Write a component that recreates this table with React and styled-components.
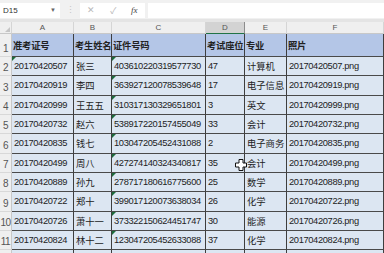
import React from "react";
import styled, { createGlobalStyle } from "styled-components";

const GlobalStyle = createGlobalStyle`
  html, body {
    margin: 0;
    padding: 0;
    background: #ffffff;
  }
`;

const COLS = "12px 62px 38px 94px 39px 42px 1fr";
const FONT = `"Liberation Sans", "Noto Sans CJK SC", sans-serif`;

const Sheet = styled.div`
  position: relative;
  width: 384px;
  height: 253px;
  overflow: hidden;
  background: #e9e9e9;
  font-family: ${FONT};
`;

const FormulaBar = styled.div`
  display: flex;
  align-items: center;
  height: 19px;
  padding-top: 1px;
  background: #f1f1f1;
  box-sizing: border-box;
`;

const NameBox = styled.div`
  display: flex;
  align-items: center;
  justify-content: space-between;
  width: 60px;
  height: 15px;
  padding: 0 4px 0 3px;
  box-sizing: border-box;
  background: #ffffff;
  font-size: 8px;
  color: #333;
`;

const Arrow = styled.span`
  font-size: 6px;
  color: #666;
`;

const Dots = styled.div`
  width: 20px;
  text-align: center;
  color: #c6c6c6;
  font-size: 9px;
  letter-spacing: -1px;
`;

const ButtonBox = styled.div`
  display: flex;
  align-items: center;
  justify-content: space-around;
  width: 65px;
  height: 15px;
  background: #ffffff;
  color: #b9b9b9;
  font-size: 9px;
`;

const Fx = styled.span`
  font-family: "Liberation Serif", serif;
  font-style: italic;
  color: #444;
  font-size: 9px;
`;

const FormulaInput = styled.div`
  flex: 1;
  height: 15px;
  margin-left: 3px;
  background: #ffffff;
`;

const Gap = styled.div`
  height: 3px;
  background: #e4e4e4;
`;

const Row = styled.div`
  display: grid;
  grid-template-columns: ${COLS};
  height: ${(p) => p.$h}px;
`;

const HeadCell = styled.div`
  display: flex;
  align-items: flex-end;
  justify-content: center;
  padding-bottom: 1px;
  box-sizing: border-box;
  font-size: 8px;
  color: #555;
  background: ${(p) => (p.$active ? "#d3d3d3" : "#efefef")};
  border-right: 1px solid ${(p) => (p.$active ? "#8c8c8c" : "#d5d5d5")};
  border-bottom: 1px solid ${(p) => (p.$active ? "#217346" : "#c8c8c8")};
`;

const Corner = styled.div`
  position: relative;
  background: #efefef;
  border-right: 1px solid #d5d5d5;
  border-bottom: 1px solid #c8c8c8;
  &::after {
    content: "";
    position: absolute;
    right: 1px;
    bottom: 1px;
    border-left: 5px solid transparent;
    border-bottom: 5px solid #c5c5c5;
  }
`;

const RowLabel = styled.div`
  display: flex;
  align-items: flex-end;
  justify-content: center;
  padding-bottom: 2px;
  box-sizing: border-box;
  font-size: 10px;
  color: #555;
  background: #efefef;
  border-right: 1px solid #c8c8c8;
  border-bottom: 1px solid #d8d8d8;
  letter-spacing: -0.5px;
`;

const Cell = styled.div`
  position: relative;
  display: flex;
  align-items: center;
  padding-left: ${(p) => (p.$bold ? 1 : 2)}px;
  box-sizing: border-box;
  overflow: hidden;
  white-space: nowrap;
  font-size: 9.3px;
  font-weight: ${(p) => (p.$bold ? 700 : 400)};
  color: #222;
  background: ${(p) => (p.$bold ? "#b4c6e7" : "#dce6f2")};
  border-right: 1px solid #3e3e3e;
  border-bottom: 1px solid #4a4a4a;
  letter-spacing: ${(p) => (p.$num ? "-0.35px" : p.$bold ? "-0.2px" : "0")};
  &::before {
    content: "";
    display: ${(p) => (p.$flag ? "block" : "none")};
    position: absolute;
    left: 0;
    top: 0;
    border-top: 4px solid #1d6b3c;
    border-right: 4px solid transparent;
  }
`;

const Cursor = styled.svg`
  position: absolute;
  left: 235px;
  top: 159px;
`;

const letters = ["A", "B", "C", "D", "E", "F"];

const headers = ["准考证号", "考生姓名", "证件号码", "考试座位", "专业", "照片"];

const data = [
  ["20170420507", "张三", "403610220319577730", "47", "计算机"],
  ["20170420919", "李四", "363927120078539648", "17", "电子信息"],
  ["20170420999", "王五五", "310317130329651801", "3", "英文"],
  ["20170420732", "赵六", "538917220157455049", "33", "会计"],
  ["20170420835", "钱七", "103047205452431088", "2", "电子商务"],
  ["20170420499", "周八", "427274140324340817", "35", "会计"],
  ["20170420889", "孙九", "278717180616775600", "25", "数学"],
  ["20170420722", "郑十", "399017120073638034", "26", "化学"],
  ["20170420726", "萧十一", "373322150624451747", "30", "能源"],
  ["20170420824", "林十二", "123047205452633088", "37", "化学"],
];

export default function App() {
  return (
    <>
      <GlobalStyle />
      <Sheet>
        <FormulaBar>
          <NameBox>
            D15
            <Arrow>▼</Arrow>
          </NameBox>
          <Dots>⋮</Dots>
          <ButtonBox>
            <span>✕</span>
            <span>✓</span>
            <Fx>fx</Fx>
          </ButtonBox>
          <FormulaInput />
        </FormulaBar>
        <Gap />
        <Row $h={12}>
          <Corner />
          {letters.map((l) => (
            <HeadCell key={l} $active={l === "D"}>
              {l}
            </HeadCell>
          ))}
        </Row>
        <Row $h={23}>
          <RowLabel>1</RowLabel>
          {headers.map((h) => (
            <Cell key={h} $bold>
              {h}
            </Cell>
          ))}
        </Row>
        {data.map((r, i) => (
          <Row key={r[0]} $h={19.33}>
            <RowLabel>{i + 2}</RowLabel>
            <Cell $num $flag={i === 0}>{r[0]}</Cell>
            <Cell>{r[1]}</Cell>
            <Cell $num $flag>{r[2]}</Cell>
            <Cell $num>{r[3]}</Cell>
            <Cell>{r[4]}</Cell>
            <Cell $num>{r[0]}.png</Cell>
          </Row>
        ))}
        <Row $h={19.33}>
          <RowLabel />
          <Cell />
          <Cell />
          <Cell />
          <Cell />
          <Cell />
          <Cell />
        </Row>
        <Cursor width="12" height="12" viewBox="0 0 12 12">
          <path
            d="M4 0.5h4v3.5h3.5v4H8v3.5H4V8H0.5V4H4z"
            fill="#fff"
            stroke="#111"
            strokeWidth="1"
          />
        </Cursor>
      </Sheet>
    </>
  );
}
